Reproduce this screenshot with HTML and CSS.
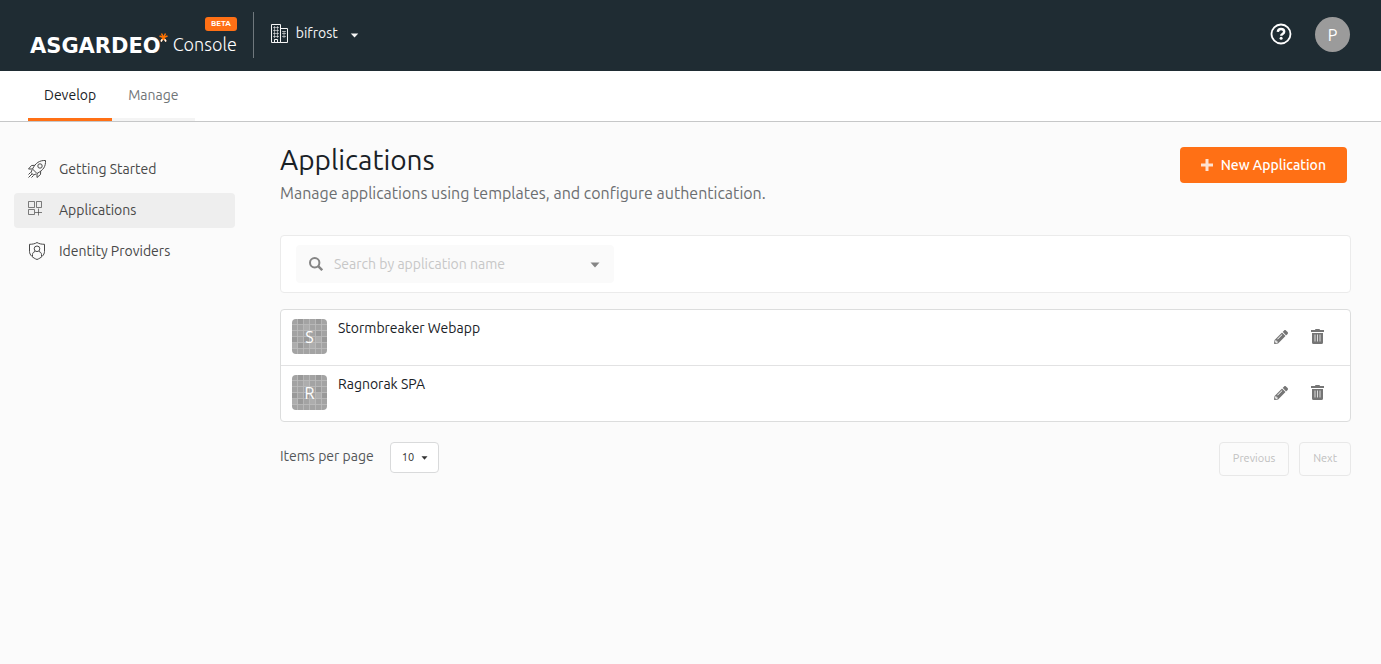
FILE: index.html
```html
<!DOCTYPE html>
<html lang="en">
<head>
<meta charset="utf-8">
<title>Applications | Asgardeo Console</title>
<link rel="stylesheet" href="styles.css">
</head>
<body>
<svg class="sprite" aria-hidden="true">
  <symbol id="caret" viewBox="0 0 10 6"><path d="M0.5 0.5h9L5 5.5z" fill="currentColor"/></symbol>
  <symbol id="pencil" viewBox="0 0 512 512"><path fill="currentColor" d="M497.9 142.1l-46.1 46.1c-4.700 4.700-12.300 4.700-17 0l-111-111c-4.700-4.700-4.700-12.300 0-17l46.100-46.100c18.700-18.700 49.100-18.700 67.900 0l60.100 60.100c18.800 18.700 18.800 49.100 0 67.900zM284.200 99.800L21.600 362.400.4 483.900c-2.900 16.400 11.400 30.600 27.800 27.800l121.500-21.300 262.600-262.600c4.700-4.700 4.700-12.300 0-17l-111-111c-4.800-4.700-12.400-4.700-17.100 0zM124.100 339.900c-5.500-5.500-5.500-14.300 0-19.800l154-154c5.500-5.500 14.300-5.500 19.800 0s5.500 14.300 0 19.800l-154 154c-5.500 5.500-14.300 5.500-19.800 0zM88 424h48v36.300l-64.500 11.300-31.100-31.100L51.700 376H88v48z"/></symbol>
  <symbol id="trash" viewBox="0 0 13 15"><path fill="currentColor" d="M4 1q0-1 1-1h3q1 0 1 1h4v2H0V1zM1 4h11v9.500q0 1.500-1.500 1.500h-8Q1 15 1 13.500z"/><path d="M4 5.500v7M6.500 5.500v7M9 5.500v7" stroke="#fff" stroke-opacity=".75"/></symbol>
  <symbol id="tile" viewBox="0 0 35 35"><path fill="#a3a3a3" d="M0 0h35v35H0z"/><path fill="#999" d="M0 18h6v6H0zM6 0h6v6H6zM12 18h6v6h-6zM24 12h6v6h-6zM30 18h5v6h-5zM6 24h6v6H6zM24 0h6v6h-6z"/><path fill="#adadad" d="M12 6h6v6h-6zM18 24h6v6h-6zM24 18h6v6h-6zM0 24h6v6H0z"/><path d="M5.500 0v35M11.500 0v35M17.500 0v35M23.500 0v35M29.500 0v35M0 5.500h35M0 11.500h35M0 17.500h35M0 23.500h35M0 29.500h35" stroke="#bcbcbc" stroke-opacity=".8" fill="none"/></symbol>
</svg>

<header class="topbar">
  <a class="brand" href="#">
    <span class="wordmark">ASGARDEO</span>
    <svg class="spark" viewBox="0 0 9 9" aria-hidden="true"><path d="M4.500 4.500L.5 3M4.500 4.500L8.500 3M4.500 4.500L2.500.5M4.500 4.500L6.500.5M4.500 4.500L2 8.500M4.500 4.500L7 8.500" stroke="#ff7300" stroke-width="1.500"/><path d="M3.300 6.400L2 8.500M5.700 6.400L7 8.500" stroke="#fff" stroke-width="1.500"/></svg>
    <span class="product"><span class="beta">BETA</span><span class="console">Console</span></span>
  </a>
  <button class="tenant" type="button">
    <svg class="building" viewBox="0 0 17 19" fill="none" stroke="currentColor" aria-hidden="true"><path d="M.5.5h9v18h-9zM9.500 4.500h7v14h-7zM3.500 18.500v-3h3v3"/><path d="M2 3.500h6M2 6.500h6M2 9.500h6M2 12.500h6M11 7.500h4M11 9.500h4M11 12.500h4M3.500 2v12M6.500 2v12M13 7v7" stroke-opacity=".55"/></svg>
    <span>bifrost</span>
    <svg class="caret-md" aria-hidden="true"><use href="#caret"/></svg>
  </button>
  <div class="account">
    <button class="help" type="button" aria-label="Help">
      <svg viewBox="0 0 22 22" fill="none" stroke="#fff" aria-hidden="true"><circle cx="11" cy="11" r="9.500" stroke-width="1.800"/><path d="M7.800 8.800C8 6.800 9.400 6 11 6c1.800 0 3.200 1.100 3.200 2.700 0 2.300-3 2.200-3 4" stroke-width="2.400"/><circle cx="11.100" cy="15.300" r="1.500" fill="#fff" stroke="none"/></svg>
    </button>
    <button class="avatar" type="button" aria-label="Account P">P</button>
  </div>
</header>

<nav class="tabs" aria-label="Sections">
  <a class="tab tab-active" href="#">Develop</a>
  <a class="tab" href="#">Manage</a>
</nav>

<div class="layout">
  <nav class="sidebar" aria-label="Develop">
    <a class="side-link" href="#">
      <svg class="side-icon" viewBox="0 0 18 18" fill="none" stroke="currentColor" stroke-linejoin="round" aria-hidden="true"><path d="M17.500.5c.3 6-2 9.500-8.500 13L4.500 9C7.500 3 11.500.2 17.500.5zM6.800 5.300L3.500 5.500.5 9l4 0M12.700 11.200l-.2 3.300L9 17.500v-4M4 10l-1 2.500L5.500 15 8 14M.5 14.500l2-2M.5 17.500l3.500-3.500M3.500 17.500l2-2"/><circle cx="12" cy="6" r="2.200"/></svg>
      Getting Started
    </a>
    <a class="side-link side-active" href="#">
      <svg class="side-icon" viewBox="0 0 18 18" fill="none" stroke="currentColor" aria-hidden="true"><path d="M.5.5h6v6h-6zM8.500.5h5v6h-5zM.5 8.500h6v5h-6zM10.500 7.500v7M7 11.500h7" stroke-opacity=".7"/></svg>
      Applications
    </a>
    <a class="side-link" href="#">
      <svg class="side-icon" viewBox="0 0 18 18" fill="none" stroke="currentColor" stroke-linejoin="round" aria-hidden="true"><path d="M9 .5c2 1.300 4.500 1.800 7.500 1.800v7.200c0 3.500-3.500 6.500-7.500 8-4-1.500-7.500-4.500-7.500-8V2.300C4.500 2.300 7 1.800 9 .5zM4.500 14.500v-2c0-1.500 1-2.500 2.500-3M13.500 14.500v-2c0-1.500-1-2.500-2.500-3"/><circle cx="9" cy="6.800" r="2.800"/></svg>
      Identity Providers
    </a>
  </nav>

  <main class="content">
    <div class="page-head">
      <div>
        <h1 class="title">Applications</h1>
        <p class="subtitle">Manage applications using templates, and configure authentication.</p>
      </div>
      <button class="primary" type="button">
        <svg class="plus" viewBox="0 0 12 12" aria-hidden="true"><path d="M6 0v12M0 6h12" stroke="#fff" stroke-width="3" stroke-opacity=".8"/></svg>
        New Application
      </button>
    </div>

    <div class="search-panel">
      <div class="search">
        <svg class="glass" viewBox="0 0 14 14" fill="none" stroke="currentColor" aria-hidden="true"><circle cx="5.700" cy="5.700" r="4.700" stroke-width="2"/><path d="M9.200 9.200L13.200 13.200" stroke-width="2.400"/></svg>
        <input class="search-input" type="text" placeholder="Search by application name" aria-label="Search by application name">
        <button class="search-more" type="button" aria-label="Advanced search"><svg class="caret-lg" aria-hidden="true"><use href="#caret"/></svg></button>
      </div>
    </div>

    <ul class="apps">
      <li class="app">
        <span class="app-tile"><svg aria-hidden="true"><use href="#tile"/></svg><span class="letter">S</span></span>
        <a class="app-name" href="#">Stormbreaker Webapp</a>
        <button class="action" type="button" aria-label="Edit Stormbreaker Webapp"><svg class="pencil" aria-hidden="true"><use href="#pencil"/></svg></button>
        <button class="action" type="button" aria-label="Delete Stormbreaker Webapp"><svg class="trash" aria-hidden="true"><use href="#trash"/></svg></button>
      </li>
      <li class="app">
        <span class="app-tile"><svg aria-hidden="true"><use href="#tile"/></svg><span class="letter">R</span></span>
        <a class="app-name" href="#">Ragnorak SPA</a>
        <button class="action" type="button" aria-label="Edit Ragnorak SPA"><svg class="pencil" aria-hidden="true"><use href="#pencil"/></svg></button>
        <button class="action" type="button" aria-label="Delete Ragnorak SPA"><svg class="trash" aria-hidden="true"><use href="#trash"/></svg></button>
      </li>
    </ul>

    <div class="pager">
      <label class="pager-label" for="per-page">Items per page</label>
      <span class="select-wrap">
        <select class="select" id="per-page"><option>10</option><option>20</option><option>30</option></select>
        <svg class="select-caret" aria-hidden="true"><use href="#caret"/></svg>
      </span>
      <div class="pager-nav">
        <button class="page-btn" type="button" disabled>Previous</button>
        <button class="page-btn" type="button" disabled>Next</button>
      </div>
    </div>
  </main>
</div>
</body>
</html>
```
FILE: styles.css
```css
* { box-sizing: border-box; }

body {
  margin: 0;
  background: #fbfbfb;
  color: #192126;
  font-family: Ubuntu, "Noto Sans", sans-serif;
  font-size: 14px;
  line-height: 20px;
}

button, input, select { font: inherit; }
button { border: 0; padding: 0; background: none; color: inherit; cursor: pointer; }
a { color: inherit; text-decoration: none; }
svg { display: block; flex: none; }
.sprite { position: absolute; width: 0; height: 0; }

/* Top bar */
.topbar {
  display: flex;
  align-items: center;
  height: 71px;
  padding: 0 31px 2px 30px;
  background: #1f2c33;
  color: #fff;
}
.brand {
  display: flex;
  align-items: flex-end;
  height: 46px;
  padding-right: 16px;
  border-right: 1px solid #6f787d;
}
.wordmark {
  font-family: "DejaVu Sans", sans-serif;
  font-size: 21px;
  font-weight: bold;
  line-height: 24px;
}
.spark { width: 9px; height: 9px; margin: 0 0 16px -2px; }
.product {
  display: flex;
  flex-direction: column;
  align-items: flex-end;
  margin-left: 5px;
}
.beta {
  padding: 0 6px;
  border-radius: 3px;
  background: #ff7015;
  font-size: 8px;
  font-weight: 700;
  line-height: 14px;
}
.console { font-size: 18px; font-weight: 300; line-height: 27px; }

.tenant {
  display: flex;
  align-items: center;
  margin-left: 17px;
  padding-bottom: 3px;
  color: #f5f5f5;
}
.building { width: 17px; height: 19px; margin-right: 8px; }
.caret-md { width: 9px; height: 5px; margin: 4px 0 0 12px; }

.account { display: flex; align-items: center; gap: 23px; margin-left: auto; }
.help { padding-bottom: 2px; }
.help svg { width: 22px; height: 22px; }
.avatar {
  width: 35px;
  height: 35px;
  border-radius: 50%;
  background: #9b9b9b;
  color: #fff;
  font-size: 16px;
}

/* Section tabs */
.tabs {
  display: flex;
  height: 51px;
  padding-left: 28px;
  border-bottom: 1px solid #c6c7c8;
  background: #fff;
}
.tab {
  padding: 14px 16px 0;
  border-bottom: 3px solid #f4f4f4;
  color: #707577;
}
.tab-active { border-color: #ff7015; color: #192126; }

/* Page layout */
.layout { display: flex; gap: 45px; padding: 20px 30px 0 14px; }
.sidebar {
  display: flex;
  flex-direction: column;
  flex: none;
  gap: 6px;
  width: 221px;
  padding-top: 10px;
}
.side-link {
  display: flex;
  align-items: center;
  gap: 13px;
  height: 35px;
  padding: 0 0 2px 14px;
  border-radius: 4px;
  color: #484848;
}
.side-active { background: #eee; }
.side-icon { width: 18px; height: 18px; }
.content { flex: 1; min-width: 0; }

.page-head {
  display: flex;
  align-items: flex-start;
  justify-content: space-between;
  padding-right: 4px;
}
.title { margin: 0; font-size: 28px; font-weight: 400; line-height: 36px; }
.subtitle { margin: 5px 0 0; color: #6b6e70; font-size: 16px; line-height: 20px; }
.primary {
  display: flex;
  align-items: center;
  justify-content: center;
  gap: 8px;
  height: 36px;
  margin-top: 5px;
  padding: 0 21px;
  border-radius: 4px;
  background: #ff7015;
  color: #fff;
  font-weight: 500;
}
.plus { width: 12px; height: 12px; }

/* Search */
.search-panel {
  margin-top: 32px;
  padding: 9px 15px;
  border: 1px solid #ebebeb;
  border-radius: 4px;
  background: #fff;
}
.search {
  display: flex;
  align-items: center;
  width: 318px;
  height: 38px;
  padding: 0 14px 0 13px;
  border-radius: 4px;
  background: #fafafa;
  color: #858585;
}
.glass { width: 14px; height: 14px; }
.search-input {
  flex: 1;
  min-width: 0;
  margin-left: 11px;
  padding: 0;
  border: 0;
  outline: 0;
  background: none;
  color: #192126;
}
.search-input::placeholder { color: #c7c7c7; opacity: 1; }
.search-more { padding-top: 2px; }
.caret-lg { width: 10px; height: 6px; }

/* Application list */
.apps {
  margin: 16px 0 0;
  padding: 0;
  border: 1px solid #dcdddd;
  border-radius: 4px;
  background: #fff;
  list-style: none;
}
.app {
  display: flex;
  align-items: center;
  height: 55px;
  padding: 0 26px 2px 11px;
}
.app + .app { height: 56px; border-top: 1px solid #e2e2e3; }
.app-tile {
  display: grid;
  width: 35px;
  height: 35px;
  border-radius: 4px;
  overflow: hidden;
  color: #fff;
  font-size: 16px;
}
.app-tile svg { grid-area: 1 / 1; width: 35px; height: 35px; }
.letter { grid-area: 1 / 1; place-self: center; z-index: 1; }
.app-name { align-self: flex-start; margin: 8px auto 0 11px; }
.action { margin-left: 23px; color: #757575; }
.pencil { width: 14px; height: 14px; }
.trash { width: 13px; height: 15px; }

/* Pagination */
.pager { display: flex; align-items: flex-start; margin-top: 20px; }
.pager-label { margin: 4px 16px 0 0; color: #545759; }
.select-wrap { position: relative; }
.select {
  display: block;
  width: 49px;
  height: 31px;
  padding: 0 0 2px 11px;
  border: 1px solid #d9dadb;
  border-radius: 4px;
  appearance: none;
  background: #fff;
  color: #333;
  font-size: 11px;
}
.select-caret {
  position: absolute;
  top: 14px;
  right: 11px;
  width: 7px;
  height: 4px;
  color: #333;
  pointer-events: none;
}
.pager-nav { display: flex; gap: 10px; margin-left: auto; }
.page-btn {
  height: 34px;
  padding: 0 13px 2px;
  border: 1px solid #e8e8e8;
  border-radius: 4px;
  color: #c0c0c0;
  font-size: 11px;
}
```
